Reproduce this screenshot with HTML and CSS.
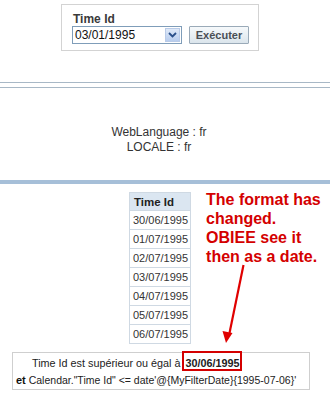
FILE: index.html
```html
<!DOCTYPE html>
<html>
<head>
<meta charset="utf-8">
<link rel="stylesheet" href="styles.css">
</head>
<body>
<div class="page">
  <div class="prompt-wrap">
    <div class="prompt">
      <div class="prompt-label">Time Id</div>
      <div class="prompt-row">
        <div class="select">
          <span class="select-value">03/01/1995</span>
          <span class="select-btn">
            <svg width="9" height="6" viewBox="0 0 9 6"><path d="M1 1 L4.5 4.5 L8 1" fill="none" stroke="#2a4f8a" stroke-width="1.8"/></svg>
          </span>
        </div>
        <button class="run-btn">Exécuter</button>
      </div>
    </div>
  </div>

  <div class="rule rule-first"></div>
  <div class="rule rule-second"></div>

  <div class="vars">
    <div>WebLanguage : fr</div>
    <div>LOCALE : fr</div>
  </div>

  <div class="bar"></div>

  <div class="result">
    <table class="grid">
      <thead><tr><th>Time Id</th></tr></thead>
      <tbody>
        <tr><td>30/06/1995</td></tr>
        <tr><td>01/07/1995</td></tr>
        <tr><td>02/07/1995</td></tr>
        <tr><td>03/07/1995</td></tr>
        <tr><td>04/07/1995</td></tr>
        <tr><td>05/07/1995</td></tr>
        <tr><td>06/07/1995</td></tr>
      </tbody>
    </table>
    <div class="note">The format has<br>changed.<br>OBIEE see it<br>then as a date.</div>
  </div>

  <div class="filter">
    <div class="filter-line1">Time Id est supérieur ou égal à<span class="hl">30/06/1995</span></div>
    <div class="filter-line2"><b>et</b> Calendar."Time Id" &lt;= date'@{MyFilterDate}{1995-07-06}'</div>
  </div>

  <svg class="arrow" width="330" height="395" viewBox="0 0 330 395">
    <line x1="243.5" y1="265" x2="229.5" y2="333" stroke="#e00000" stroke-width="2.2"/>
    <polygon points="222.5,331 232.5,333 226,343" fill="#e00000"/>
  </svg>
</div>
</body>
</html>
```
FILE: styles.css
```css
html, body {
  margin: 0;
  padding: 0;
  background: #ffffff;
}
body {
  font-family: "Liberation Sans", Arial, sans-serif;
  color: #333333;
}
.page {
  position: relative;
  width: 330px;
  height: 395px;
  overflow: hidden;
}
.prompt-wrap {
  padding-top: 4px;
  display: flex;
  padding-left: 61px;
}
.prompt {
  width: 196px;
  height: 45px;
  border: 1px solid #d3d3d3;
  padding: 0;
  box-sizing: content-box;
}
.prompt-label {
  font-weight: bold;
  font-size: 12px;
  line-height: 14px;
  color: #3a3a3a;
  padding: 7px 0 0 11px;
  height: 14px;
}
.prompt-row {
  display: flex;
  align-items: center;
  padding-left: 10px;
}
.select {
  width: 108px;
  height: 16px;
  border: 1px solid #7f9db9;
  display: flex;
  align-items: center;
  justify-content: space-between;
  background: #fff;
}
.select-value {
  font-size: 12px;
  color: #111;
  padding-left: 2px;
  line-height: 16px;
}
.select-btn {
  width: 15px;
  height: 14px;
  margin-right: 1px;
  background: linear-gradient(#dfe9f8, #b8cdee);
  border: 1px solid #b9cbe8;
  box-sizing: border-box;
  display: flex;
  align-items: center;
  justify-content: center;
}
.run-btn {
  margin-left: 7px;
  width: 60px;
  height: 18px;
  padding: 0;
  border: 1px solid #9aaab8;
  border-radius: 1px;
  background: linear-gradient(#f6f9fb, #dbe5ec);
  font-family: "Liberation Sans", Arial, sans-serif;
  font-weight: bold;
  font-size: 11px;
  color: #4a4f55;
  line-height: 16px;
}
.rule {
  height: 1px;
  background: #a8b8c6;
}
.rule-first {
  margin-top: 31px;
}
.rule-second {
  margin-top: 4px;
}
.vars {
  margin-top: 37px;
  text-align: center;
  font-size: 12px;
  line-height: 15px;
  color: #333;
  padding-right: 12px;
}
.bar {
  margin-top: 25px;
  height: 4px;
  background: #a6bfd8;
}
.result {
  display: flex;
  align-items: flex-start;
  padding-left: 129px;
  margin-top: 8px;
}
.grid {
  border-collapse: collapse;
  font-size: 11px;
}
.grid th, .grid td {
  border: 1px solid #cfd9e3;
  height: 18px;
  padding: 0 2px 0 3px;
  box-sizing: border-box;
  text-align: left;
  color: #333;
  white-space: nowrap;
}
.grid th {
  background: #dbe6f1;
  font-weight: bold;
  font-size: 11.5px;
  color: #222;
  padding-left: 4px;
}
.grid td {
  height: 19px;
}
.note {
  margin-left: 15px;
  margin-top: -2px;
  color: #d40000;
  font-weight: bold;
  font-size: 16px;
  line-height: 19px;
}
.filter {
  margin: 8px 0 0 12px;
  width: 298px;
  border: 1px solid #cfcfcf;
  font-size: 10.5px;
  line-height: 18px;
  color: #222;
  padding: 0 0 0 3px;
  box-sizing: border-box;
  white-space: nowrap;
}
.filter-line1 {
  padding-left: 16px;
  padding-top: 1px;
  font-size: 10.8px;
}
.filter-line2 {
  margin-top: -1px;
}
.filter-line2 b {
  font-weight: bold;
  color: #111;
  font-size: 11px;
}
.hl {
  font-weight: bold;
  color: #222;
  border: 2px solid #d40000;
  padding: 4px 1px 0 1px;
  margin-left: 2px;
}
.arrow {
  position: absolute;
  left: 0;
  top: 0;
  pointer-events: none;
}
```
